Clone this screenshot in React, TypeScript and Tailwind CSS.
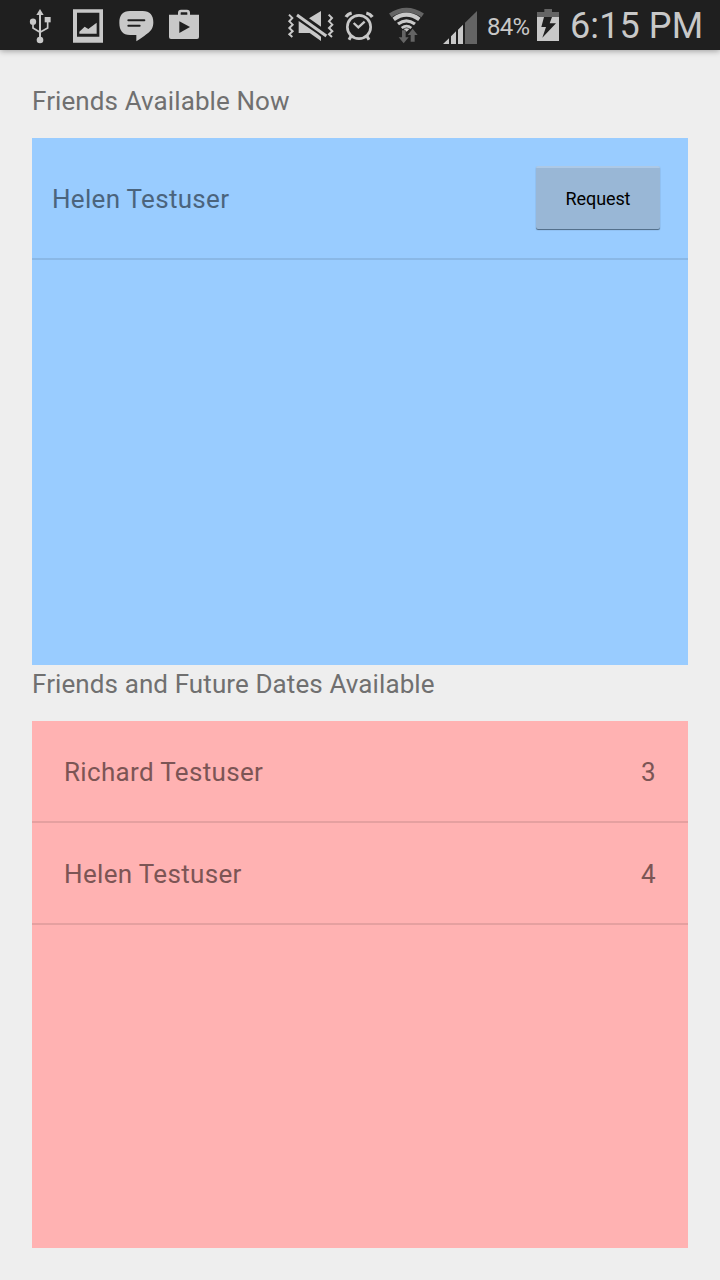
import type { ReactNode } from "react";

const LIGHT = "#c8c8c8";
const DIM = "#646464";

function UsbIcon() {
  return (
    <svg className="ml-[29px] shrink-0" width="23" height="50" viewBox="87 0 69 150" fill={LIGHT}>
      <path d="M117 40h6v72h-6z" />
      <path d="M120 27l11 18h-22z" />
      <circle cx="99" cy="65" r="9.500" />
      <path d="M134 51h18v16h-18z" />
      <circle cx="120" cy="120" r="10" />
      <path d="M99 66v18l21 13l23-13V62" fill="none" stroke={LIGHT} strokeWidth="5" />
    </svg>
  );
}

function PictureIcon() {
  return (
    <svg className="ml-[21px] shrink-0" width="30" height="50" viewBox="219 0 90 150" fill={LIGHT}>
      <path fillRule="evenodd" d="M219 28h90v100h-90zM231 38v72h67V38z" />
      <path d="M238 101V95l16-15 11 7 25-19v33z" />
    </svg>
  );
}

function ChatIcon() {
  return (
    <svg className="ml-[16px] shrink-0" width="35" height="50" viewBox="356 0 105 150" fill={LIGHT}>
      <path d="M389 33h38c22 0 32 13 32 34 0 17-7 27-20 35-10 8-19 15-31 22v-19h-19c-22 0-32-14-32-37 0-22 10-35 32-35z" />
      <path d="M384 61h48M384 77h34" stroke="#1f1f1f" strokeWidth="6" strokeLinecap="round" />
    </svg>
  );
}

function StoreIcon() {
  return (
    <svg className="ml-[14px] shrink-0" width="32" height="50" viewBox="504 0 96 150" fill={LIGHT}>
      <path d="M507 44h90v67q0 6-6 6h-78q-6 0-6-6z" />
      <path d="M538 46V38q0-5 5-5h18q5 0 5 5v8" fill="none" stroke={LIGHT} strokeWidth="8" />
      <path d="M538 64l32 17-32 18z" fill="#1f1f1f" />
    </svg>
  );
}

function VibrateMuteIcon() {
  return (
    <svg className="ml-[86px] shrink-0" width="49" height="50" viewBox="48 0 147 150" fill={LIGHT}>
      <path
        d="M57 44l10 10-9 10 10 10-10 10 10 10-10 9 9 8M176 44l10 10-9 10 10 10-10 10 10 10-10 9 9 8"
        fill="none"
        stroke={LIGHT}
        strokeWidth="6"
      />
      <path d="M86 63l56 38L153 110v13l-34-24H86zM117 55l36-22v47z" />
      <path d="M84 47l84 60" stroke="#1f1f1f" strokeWidth="15" />
      <path d="M81 45l88 63" stroke={LIGHT} strokeWidth="9" />
    </svg>
  );
}

function AlarmIcon() {
  return (
    <svg className="ml-[9px] shrink-0" width="30" height="50" viewBox="222 0 90 150" fill="none" stroke={LIGHT}>
      <circle cx="267" cy="81" r="35" strokeWidth="8" />
      <path d="M251 69l14 13 19-17" strokeWidth="7" />
      <path d="M228 51q5-9 17-12M289 39q12 3 18 12" strokeWidth="10" />
      <path d="M244 107l-7 12M290 107l7 12" strokeWidth="9" />
    </svg>
  );
}

function WifiIcon() {
  return (
    <svg className="ml-[14px] shrink-0" width="36" height="50" viewBox="354 0 108 150" fill="none">
      <path d="M361 46q48-32 97 0" stroke={DIM} strokeWidth="14" />
      <path d="M371 58q38-28 77 0" stroke={LIGHT} strokeWidth="12" />
      <path d="M384 72q25-19 51 0" stroke={LIGHT} strokeWidth="10" />
      <path d="M395 84q15-11 29 0" stroke={LIGHT} strokeWidth="8" />
      <path d="M401 87q9-5 17 0l-8 8z" fill={LIGHT} />
      <path d="M396 91h11v21h9l-15 18-15-18h10zM422 125V105h-9l15-19 15 19h-9v20z" fill={DIM} />
    </svg>
  );
}

function SignalIcon() {
  return (
    <svg className="ml-[18px] shrink-0" width="36" height="50" viewBox="516 0 108 150" fill={LIGHT}>
      <path d="M519 132l18-17v17zM543 109l15-15v38h-15zM564 89l15-15v58h-15z" />
      <path d="M585 68l36-35v99h-36z" fill={DIM} />
    </svg>
  );
}

function BatteryIcon() {
  return (
    <svg className="ml-[7px] shrink-0" width="22" height="50" viewBox="321 0 66 150" fill={LIGHT}>
      <path d="M321 51h66v72h-66z" />
      <path d="M321 36h22v-9h23v9h21v15h-66z" fill={DIM} />
      <path d="M342 51h24l-7 19h19l-41 43 11-32h-14z" fill="#1f1f1f" />
    </svg>
  );
}

function StatusBar() {
  return (
    <header className="relative z-10 flex h-[50px] shrink-0 items-center bg-[#1f1f1f] text-[#c8c8c8] shadow-[0_1px_6px_rgba(0,0,0,0.35)]">
      <UsbIcon />
      <PictureIcon />
      <ChatIcon />
      <StoreIcon />
      <VibrateMuteIcon />
      <AlarmIcon />
      <WifiIcon />
      <SignalIcon />
      <span className="ml-[9px] w-[43px] shrink-0 pt-[3px] text-[24px] leading-none tracking-[-0.7px] whitespace-nowrap">84%</span>
      <BatteryIcon />
      <span className="ml-[11px] shrink-0 pt-px text-[36px] leading-none tracking-[0.1px] whitespace-nowrap">6:15 PM</span>
    </header>
  );
}

function Heading({ children }: { children: ReactNode }) {
  return <h2 className="h-[56px] pt-[3px] text-[26px] leading-[32px] tracking-[0.1px] text-[#707070]">{children}</h2>;
}

function FutureRow({ name, count }: { name: string; count: number }) {
  return (
    <li className="flex h-[102px] items-center justify-between border-b-2 border-[#e5a0a0] px-8 pt-[2px] text-[26px] text-[#7c5555]">
      <span className="tracking-[0.33px]">{name}</span>
      <span className="tracking-[0.5px]">{count}</span>
    </li>
  );
}

export default function App() {
  return (
    <div className="flex h-[1280px] w-[720px] flex-col bg-[#eeeeee] font-['Roboto',sans-serif]">
      <StatusBar />
      <main className="flex flex-1 flex-col px-8 pt-8 pb-8">
        <Heading>Friends Available Now</Heading>
        <ul className="h-[527px] bg-[#99ccff]">
          <li className="flex h-[122px] items-center justify-between border-b-2 border-[#8ab8e6] pr-7 pl-5">
            <span className="pt-[2px] text-[26px] tracking-[0.3px] text-[#4b647d]">Helen Testuser</span>
            <button className="mb-px h-[63px] w-[124px] rounded-[2px] border-t-2 border-[#adc9e6] bg-[#99b7d6] text-[18px] tracking-[-0.1px] text-black shadow-[0_1px_1px_rgba(0,0,0,0.5)]">
              Request
            </button>
          </li>
        </ul>
        <Heading>Friends and Future Dates Available</Heading>
        <ul className="h-[527px] bg-[#ffb2b2]">
          <FutureRow name="Richard Testuser" count={3} />
          <FutureRow name="Helen Testuser" count={4} />
        </ul>
      </main>
    </div>
  );
}
